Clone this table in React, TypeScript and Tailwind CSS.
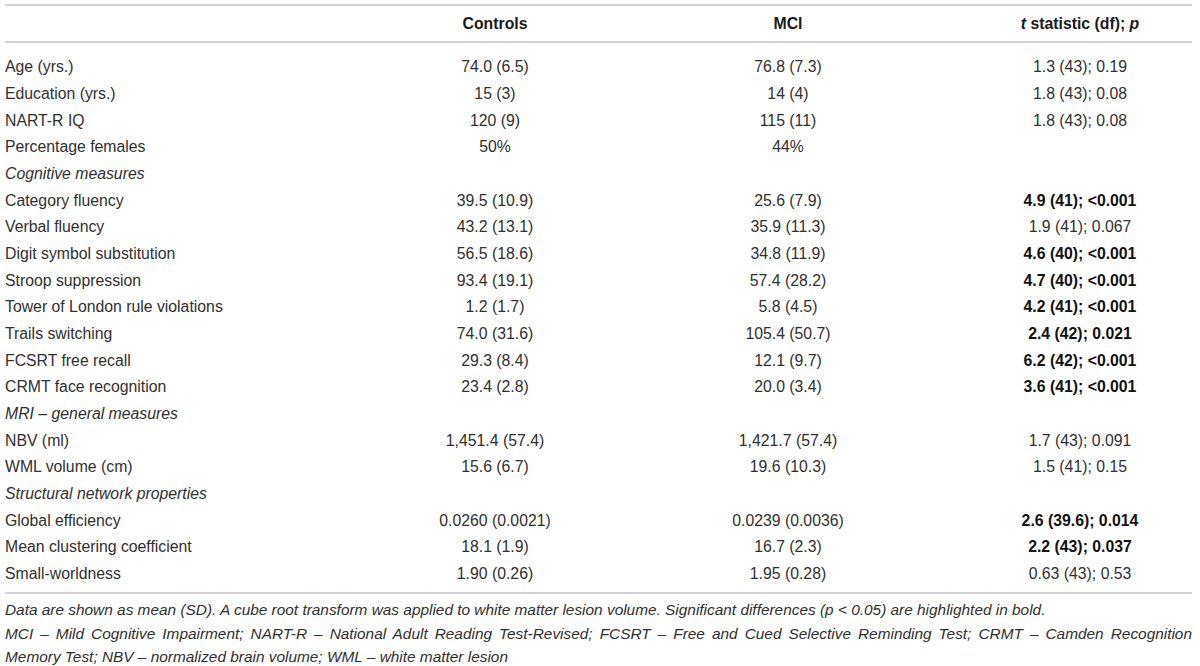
import React from "react";

type Row =
  | { kind: "section"; label: string }
  | { kind: "data"; label: string; c: string; m: string; t: string; bold?: boolean };

const rows: Row[] = [
  { kind: "data", label: "Age (yrs.)", c: "74.0 (6.5)", m: "76.8 (7.3)", t: "1.3 (43); 0.19" },
  { kind: "data", label: "Education (yrs.)", c: "15 (3)", m: "14 (4)", t: "1.8 (43); 0.08" },
  { kind: "data", label: "NART-R IQ", c: "120 (9)", m: "115 (11)", t: "1.8 (43); 0.08" },
  { kind: "data", label: "Percentage females", c: "50%", m: "44%", t: "" },
  { kind: "section", label: "Cognitive measures" },
  { kind: "data", label: "Category fluency", c: "39.5 (10.9)", m: "25.6 (7.9)", t: "4.9 (41); <0.001", bold: true },
  { kind: "data", label: "Verbal fluency", c: "43.2 (13.1)", m: "35.9 (11.3)", t: "1.9 (41); 0.067" },
  { kind: "data", label: "Digit symbol substitution", c: "56.5 (18.6)", m: "34.8 (11.9)", t: "4.6 (40); <0.001", bold: true },
  { kind: "data", label: "Stroop suppression", c: "93.4 (19.1)", m: "57.4 (28.2)", t: "4.7 (40); <0.001", bold: true },
  { kind: "data", label: "Tower of London rule violations", c: "1.2 (1.7)", m: "5.8 (4.5)", t: "4.2 (41); <0.001", bold: true },
  { kind: "data", label: "Trails switching", c: "74.0 (31.6)", m: "105.4 (50.7)", t: "2.4 (42); 0.021", bold: true },
  { kind: "data", label: "FCSRT free recall", c: "29.3 (8.4)", m: "12.1 (9.7)", t: "6.2 (42); <0.001", bold: true },
  { kind: "data", label: "CRMT face recognition", c: "23.4 (2.8)", m: "20.0 (3.4)", t: "3.6 (41); <0.001", bold: true },
  { kind: "section", label: "MRI – general measures" },
  { kind: "data", label: "NBV (ml)", c: "1,451.4 (57.4)", m: "1,421.7 (57.4)", t: "1.7 (43); 0.091" },
  { kind: "data", label: "WML volume (cm)", c: "15.6 (6.7)", m: "19.6 (10.3)", t: "1.5 (41); 0.15" },
  { kind: "section", label: "Structural network properties" },
  { kind: "data", label: "Global efficiency", c: "0.0260 (0.0021)", m: "0.0239 (0.0036)", t: "2.6 (39.6); 0.014", bold: true },
  { kind: "data", label: "Mean clustering coefficient", c: "18.1 (1.9)", m: "16.7 (2.3)", t: "2.2 (43); 0.037", bold: true },
  { kind: "data", label: "Small-worldness", c: "1.90 (0.26)", m: "1.95 (0.28)", t: "0.63 (43); 0.53" },
];

const grid = "grid grid-cols-[345px_290px_296px_1fr] items-center";

export default function App() {
  return (
    <div
      className="w-[1200px] h-[666px] bg-white text-[#303030] overflow-hidden"
      style={{ fontFamily: '"Liberation Sans", Arial, sans-serif' }}
    >
      <div className="ml-[5px] mr-[8px] pt-[4px]">
        <div className="border-t-2 border-b-2 border-[#d2d2d2]">
          <div className={`${grid} h-[35px] text-[15.8px] font-bold text-[#1a1a1a]`}>
            <div></div>
            <div className="text-center">Controls</div>
            <div className="text-center">MCI</div>
            <div className="text-center pl-[32px]">
              <i>t</i> statistic (df); <i>p</i>
            </div>
          </div>
        </div>
        <div className="pt-[11px] pb-[5px] border-b-2 border-[#d2d2d2] text-[15.8px]">
          {rows.map((r, i) =>
            r.kind === "section" ? (
              <div key={i} className="h-[26.66px] flex items-center italic">
                {r.label}
              </div>
            ) : (
              <div key={i} className={`${grid} h-[26.66px]`}>
                <div className="whitespace-nowrap">{r.label}</div>
                <div className="text-center">{r.c}</div>
                <div className="text-center">{r.m}</div>
                <div className={`text-center pl-[32px] ${r.bold ? "font-bold text-[#111]" : ""}`}>{r.t}</div>
              </div>
            )
          )}
        </div>
        <div className="pt-[4px] italic text-[15.4px] leading-[23.5px]">
          <div className="whitespace-nowrap">
            Data are shown as mean (SD). A cube root transform was applied to white matter lesion volume. Significant differences (p {"<"} 0.05) are highlighted in bold.
          </div>
          <div className="text-justify [text-align-last:justify] whitespace-nowrap">
            MCI – Mild Cognitive Impairment; NART-R – National Adult Reading Test-Revised; FCSRT – Free and Cued Selective Reminding Test; CRMT – Camden Recognition
          </div>
          <div className="whitespace-nowrap">
            Memory Test; NBV – normalized brain volume; WML – white matter lesion
          </div>
        </div>
      </div>
    </div>
  );
}
